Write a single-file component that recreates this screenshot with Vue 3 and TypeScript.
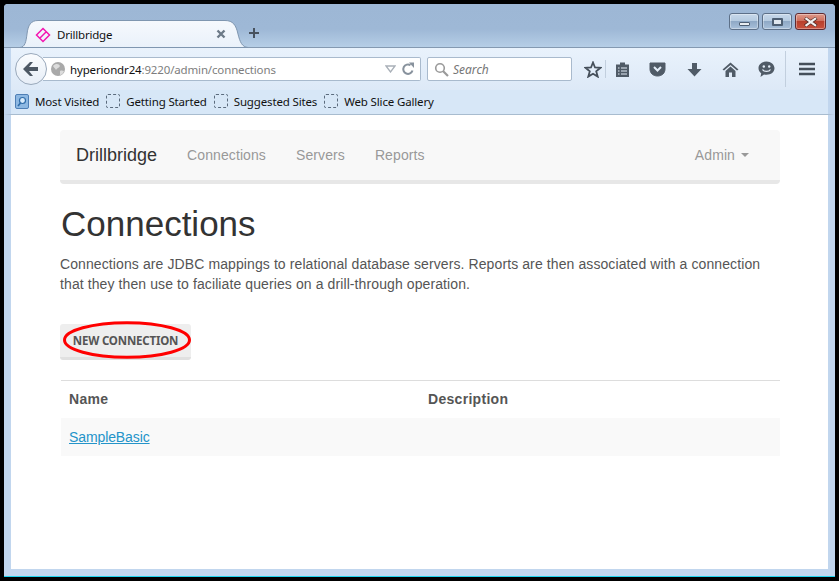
<script setup lang="ts">
const bookmarks = ['Getting Started', 'Suggested Sites', 'Web Slice Gallery']
const links = ['Connections', 'Servers', 'Reports']
</script>

<template>
  <div class="frame">
    <div class="window">
      <header class="titlebar">
        <div class="tab">
          <svg class="tab-bg" width="228" height="28" viewBox="0 0 228 28">
            <path d="M0 27.500C5 27 6 22 7 14C8 5 11 0.500 18 0.500H205C213 0.500 216 5 218 14C220 22 222 27 228 27.500Z" fill="url(#tabfill)" stroke="#7f96b0" />
            <defs>
              <linearGradient id="tabfill" x1="0" y1="0" x2="0" y2="1">
                <stop offset="0" stop-color="#f6f9fd" />
                <stop offset="1" stop-color="#e9f1fa" />
              </linearGradient>
            </defs>
          </svg>
          <svg class="favicon" width="16" height="16" viewBox="0 0 16 16">
            <path d="M8 1.500L14.500 8L8 14.500L1.500 8Z M5 11L11 5" fill="none" stroke="#f316b0" stroke-width="1.500" />
          </svg>
          <span class="tab-title">Drillbridge</span>
          <svg class="tab-close" width="10" height="10" viewBox="0 0 10 10">
            <path d="M1.500 1.500L8.500 8.500M8.500 1.500L1.500 8.500" stroke="#6d7a88" stroke-width="2.400" />
          </svg>
        </div>
        <svg class="newtab" width="12" height="12" viewBox="0 0 12 12">
          <path d="M6 1V11M1 6H11" stroke="#48525e" stroke-width="2" />
        </svg>
        <div class="caption">
          <div class="cap-btn">
            <span class="cap-min"></span>
          </div>
          <div class="cap-btn">
            <span class="cap-max"></span>
          </div>
          <div class="cap-btn cap-close">
            <svg width="16" height="10" viewBox="0 0 16 10">
              <path d="M2 1L13.500 9M13.500 1L2 9" stroke="#4d2a26" stroke-width="3.400" />
              <path d="M2.500 1.200L13 8.800M13 1.200L2.500 8.800" stroke="#f4f1f0" stroke-width="2.200" />
            </svg>
          </div>
        </div>
      </header>

      <div class="navbar-browser">
        <div class="back">
          <svg width="18" height="16" viewBox="0 0 18 16">
            <path d="M8 1L1 8L8 15H11L7 10H16V6H7L11 1Z" fill="#4d5864" />
          </svg>
        </div>
        <div class="urlbar">
          <svg class="globe" width="16" height="16" viewBox="0 0 16 16">
            <circle cx="8" cy="8" r="7" fill="#a9a9a9" />
            <path d="M3 5C6 2 9 3 10 5C9 7 7 7 6 9C5 7 4 7 3 5ZM10 10C12 9 13 10 14 10C13 13 11 14 10 14Z" fill="#dcdcdc" />
          </svg>
          <span class="url"><span class="url-host">hyperiondr24</span>:9220/admin/connections</span>
          <svg class="drop" width="11" height="8" viewBox="0 0 11 8">
            <path d="M1 1H10L5.500 7Z" fill="none" stroke="#a9b0b8" stroke-width="1.300" />
          </svg>
          <svg class="reload" width="14" height="14" viewBox="0 0 14 14">
            <path d="M11.500 8.500A4.700 4.700 0 1 1 9.500 3.200" fill="none" stroke="#88929d" stroke-width="2" />
            <path d="M8 0.500L13 0.500L13 6Z" fill="#88929d" />
          </svg>
        </div>
        <div class="searchbar">
          <svg width="15" height="15" viewBox="0 0 15 15">
            <circle cx="6" cy="6" r="4.300" fill="none" stroke="#9a9a9a" stroke-width="1.600" />
            <path d="M9 9L14 14" stroke="#9a9a9a" stroke-width="2.200" />
          </svg>
          <span class="search-text">Search</span>
        </div>
        <div class="tools">
          <svg class="t-star" width="18" height="17" viewBox="0 0 18 17">
            <path d="M9 1.500L11 6.500L16.500 6.800L12.200 10.300L13.700 15.600L9 12.700L4.300 15.600L5.800 10.300L1.500 6.800L7 6.500Z" fill="none" stroke="#454f5a" stroke-width="1.800" />
          </svg>
          <span class="t-sep"></span>
          <svg class="t-reader" width="15" height="17" viewBox="0 0 15 17">
            <path d="M1 3.500H5V1.500H10V3.500H14V16H1Z" fill="#505b67" />
            <path d="M3 7H4.500M6 7H12M3 10H4.500M6 10H12M3 13H4.500M6 13H12" stroke="#e3edf8" stroke-width="1.200" />
          </svg>
          <svg class="t-pocket" width="17" height="15" viewBox="0 0 17 15">
            <path d="M1 1H16V7C16 11 13 14 8.500 14C4 14 1 11 1 7Z" fill="#505b67" stroke="#505b67" />
            <path d="M5 5L8.500 8.500L12 5" fill="none" stroke="#e3edf8" stroke-width="2" />
          </svg>
          <svg class="t-down" width="15" height="15" viewBox="0 0 15 15">
            <path d="M5 1H10V7H14.500L7.500 14.500L0.500 7H5Z" fill="#505b67" />
          </svg>
          <svg class="t-home" width="17" height="15" viewBox="0 0 17 15">
            <path d="M8.500 0.500L16.500 7.500L15 8.500L8.500 3L2 8.500L0.500 7.500Z" fill="#505b67" />
            <path d="M3.500 9L8.500 4.500L13.500 9V15H10V10.500H7V15H3.500Z" fill="#505b67" />
          </svg>
          <svg class="t-chat" width="17" height="17" viewBox="0 0 17 17">
            <path d="M8.500 0.500C13 0.500 16.500 3.500 16.500 7.300C16.500 11 13 13.800 8.500 13.800C7.500 13.800 6.800 13.700 6 13.500L2.500 16L3.200 12.300C1.500 11 0.500 9.300 0.500 7.300C0.500 3.500 4 0.500 8.500 0.500Z" fill="#505b67" />
            <circle cx="5.800" cy="5.500" r="1.200" fill="#e3edf8" />
            <circle cx="11.200" cy="5.500" r="1.200" fill="#e3edf8" />
            <path d="M4.500 8.500C6 11 11 11 12.500 8.500" fill="none" stroke="#e3edf8" stroke-width="1.300" />
          </svg>
          <span class="t-sep2"></span>
          <svg class="t-menu" width="16" height="14" viewBox="0 0 16 14">
            <path d="M0 2H16M0 7H16M0 12H16" stroke="#454f5a" stroke-width="2.400" />
          </svg>
        </div>
      </div>

      <div class="bookmarks">
        <div class="bm">
          <svg width="14" height="15" viewBox="0 0 14 15">
            <rect x="0.500" y="0.500" width="13" height="14" rx="1.500" fill="#8db8e2" stroke="#4e7fb5" />
            <circle cx="7.500" cy="6.500" r="3" fill="#d8ebfb" stroke="#2f6ca8" stroke-width="1.200" />
            <path d="M5.500 9L3 12" stroke="#2f6ca8" stroke-width="1.600" />
          </svg>
          <span>Most Visited</span>
        </div>
        <div v-for="b in bookmarks" :key="b" class="bm">
          <span class="bm-blank"></span>
          <span>{{ b }}</span>
        </div>
      </div>

      <main class="page">
        <nav class="nav">
          <span class="brand">Drillbridge</span>
          <a v-for="l in links" :key="l" class="nav-link">{{ l }}</a>
          <span class="nav-admin">Admin<i class="caret"></i></span>
        </nav>
        <h1 class="heading">Connections</h1>
        <p class="lead">
          Connections are JDBC mappings to relational database servers. Reports are then associated with a connection
          that they then use to faciliate queries on a drill-through operation.
        </p>
        <div class="btn-wrap">
          <button class="btn" type="button">NEW CONNECTION</button>
          <svg class="ring" width="129" height="39" viewBox="0 0 129 39">
            <ellipse cx="64" cy="19" rx="62.500" ry="17.300" fill="none" stroke="#ff0000" stroke-width="3" />
          </svg>
        </div>
        <table class="table">
          <thead>
            <tr>
              <th class="col-name">Name</th>
              <th>Description</th>
            </tr>
          </thead>
          <tbody>
            <tr>
              <td><a class="row-link">SampleBasic</a></td>
              <td></td>
            </tr>
          </tbody>
        </table>
      </main>
    </div>
  </div>
</template>

<style>
html, body { margin: 0; background: #000; }
</style>

<style scoped>
.frame {
  width: 839px;
  height: 581px;
  box-sizing: border-box;
  padding: 4px 4px 4px 4px;
  background: #000;
  font-family: "Noto Sans", "Open Sans", sans-serif;
  overflow: hidden;
}
.window {
  height: 573px;
  box-sizing: border-box;
  padding: 0 7px 7px 7px;
  background: linear-gradient(180deg, #9db7d5 0, #9eb8d6 25px, #b7cfe7 44px, #c1d6ee 44px);
  background-color: #c1d6ee;
  border-bottom: 1px solid #1fd3ee;
  display: flex;
  flex-direction: column;
  border-radius: 4px 4px 0 0;
  position: relative;
}
.titlebar {
  height: 44px;
  flex: none;
  margin: 0 -7px;
  padding-left: 16px;
  display: flex;
  align-items: flex-end;
  position: relative;
  border-bottom: 1px solid #8499b1;
  box-sizing: border-box;
}
.tab {
  width: 228px;
  height: 28px;
  margin-bottom: -1px;
  position: relative;
  display: flex;
  align-items: center;
  flex: none;
  padding-left: 15px;
  box-sizing: border-box;
}
.tab-bg { position: absolute; left: 0; top: 0; }
.favicon { position: relative; margin-right: 6px; margin-top: 1px; }
.tab-title { position: relative; font-size: 11.500px; letter-spacing: -0.2px; color: #111; flex: 1; }
.tab-close { position: relative; margin-right: 22px; }
.newtab { margin: 0 0 8px 0; }
.caption {
  position: absolute;
  right: 9px;
  top: 9px;
  display: flex;
  gap: 3px;
}
.cap-btn {
  width: 28px;
  height: 15px;
  border: 1px solid #5d7088;
  border-radius: 3px;
  background: linear-gradient(180deg, #c7d8ea 0, #b6cbe0 45%, #8fa9c6 50%, #a8c0da 100%);
  box-shadow: inset 0 0 0 1px rgba(255,255,255,.35);
  display: flex;
  align-items: center;
  justify-content: center;
}
.cap-close {
  width: 29px;
  background: linear-gradient(180deg, #dd9a8b 0, #cf6f5d 45%, #b8402c 50%, #c9503c 100%);
  border-color: #5f2a30;
}
.cap-min {
  width: 11px;
  height: 4px;
  margin-top: 4px;
  background: #e9edf1;
  border: 1px solid #4d5e72;
  box-sizing: border-box;
  border-radius: 1px;
}
.cap-max {
  width: 11px;
  height: 8px;
  background: #dfe6ee;
  border: 2px solid #4d5e72;
  box-sizing: border-box;
  border-radius: 1px;
}
.navbar-browser {
  height: 42px;
  flex: none;
  margin: 0 -7px;
  padding-left: 7px;
  padding-right: 7px;
  box-sizing: border-box;
  display: flex;
  align-items: center;
  background: linear-gradient(180deg, #e9f2fc 0, #dde9f7 100%);
  border-right: 7px solid #c1d6ee;
  border-left: 7px solid #c1d6ee;
  position: relative;
}
.back {
  width: 30px;
  height: 30px;
  margin-left: -3px;
  flex: none;
  border-radius: 50%;
  background: linear-gradient(180deg, #fafcfe, #e7eef7);
  border: 1px solid #9aa9bb;
  display: flex;
  align-items: center;
  justify-content: center;
  position: relative;
  z-index: 1;
}
.urlbar {
  width: 378px;
  height: 24px;
  margin-left: -4px;
  flex: none;
  background: #fff;
  border: 1px solid #a9bacd;
  border-left: none;
  border-radius: 0 2px 2px 0;
  box-sizing: border-box;
  display: flex;
  align-items: center;
  padding-left: 7px;
}
.globe { flex: none; }
.url { margin-left: 4px; font-size: 11.500px; letter-spacing: -0.15px; color: #7d7d7d; flex: 1; white-space: nowrap; }
.url-host { color: #111; }
.drop { margin-right: 5px; }
.reload { margin-right: 5px; }
.searchbar {
  width: 145px;
  height: 24px;
  margin-left: 6px;
  flex: none;
  background: #fff;
  border: 1px solid #a9bacd;
  border-radius: 2px;
  box-sizing: border-box;
  display: flex;
  align-items: center;
  padding-left: 6px;
}
.search-text { font-size: 12px; font-style: italic; color: #767676; margin-left: 4px; }
.tools {
  display: flex;
  align-items: center;
  margin-left: 12px;
  height: 42px;
  flex: none;
}
.t-sep { width: 1px; height: 18px; background: #c2cfde; margin: 0 9px 0 3px; }
.t-pocket { margin-left: 19px; }
.t-down { margin-left: 21px; }
.t-home { margin-left: 20px; }
.t-chat { margin-left: 19px; }
.t-sep2 { width: 1px; height: 36px; background: #c2cfde; margin: 0 13px 0 10px; }
.bookmarks {
  height: 25px;
  flex: none;
  margin: 0 -7px;
  padding: 0 0 2px 4px;
  border-left: 7px solid #c1d6ee;
  border-right: 7px solid #c1d6ee;
  background: #d7e7f7;
  display: flex;
  align-items: center;
  gap: 7px;
  box-sizing: border-box;
  font-size: 11.500px;
  letter-spacing: -0.15px;
  color: #111;
  border-bottom: 1px solid #a8bccf;
}
.bm { display: flex; align-items: center; gap: 6px; white-space: nowrap; }
.bm-blank {
  width: 14px;
  height: 14px;
  border: 1px dashed #5b6b7d;
  border-radius: 2px;
  box-sizing: border-box;
}
.page {
  flex: 1;
  background: #fff;
  padding: 15px 48px 0 49px;
  font-family: "Liberation Sans", Arial, sans-serif;
  color: #555;
}
.nav {
  height: 50px;
  box-sizing: content-box;
  background: #f8f8f8;
  border-bottom: 4px solid #e7e7e7;
  border-radius: 4px;
  display: flex;
  align-items: center;
  padding-left: 16px;
  padding-right: 31px;
  font-size: 14px;
  letter-spacing: 0.1px;
}
.brand { font-size: 18px; letter-spacing: 0; color: #333; margin-right: 30px; }
.nav-link { color: #999; margin-right: 30px; }
.nav-admin { color: #999; margin-left: auto; display: flex; align-items: center; }
.caret {
  width: 0;
  height: 0;
  margin-left: 6px;
  border-left: 4px solid transparent;
  border-right: 4px solid transparent;
  border-top: 4px solid #999;
}
.heading {
  margin: 20px 0 0;
  font-size: 35px;
  line-height: 40px;
  font-weight: 400;
  color: #333;
  padding-left: 1px;
}
.lead {
  margin: 10px 0 0;
  font-size: 14px;
  line-height: 20px;
  color: #555;
  letter-spacing: 0.1px;
  width: 720px;
}
.btn-wrap { position: relative; margin-top: 30px; height: 36px; width: 131px; }
.btn {
  width: 131px;
  height: 36px;
  padding: 0;
  border: none;
  border-bottom: 3px solid #e0e0e0;
  border-radius: 3px;
  background: #eee;
  color: #555;
  font-family: "Noto Sans", "Open Sans", sans-serif;
  font-size: 11.500px;
  font-weight: 700;
  letter-spacing: -0.2px;
}
.ring { position: absolute; left: 3px; top: -3px; }
.table {
  margin: 20px 0 0 1px;
  width: 719px;
  border-collapse: collapse;
  font-size: 14px;
  table-layout: fixed;
}
.table th {
  text-align: left;
  height: 37px;
  padding: 0 8px;
  font-weight: 700;
  border-top: 1px solid #ddd;
  color: #555;
  box-sizing: border-box;
  letter-spacing: 0.3px;
}
.col-name { width: 359px; }
.table td {
  height: 38px;
  padding: 0 8px;
  background: #f9f9f9;
  box-sizing: border-box;
}
.row-link { color: #2494c9; text-decoration: underline; letter-spacing: -0.1px; }
</style>
